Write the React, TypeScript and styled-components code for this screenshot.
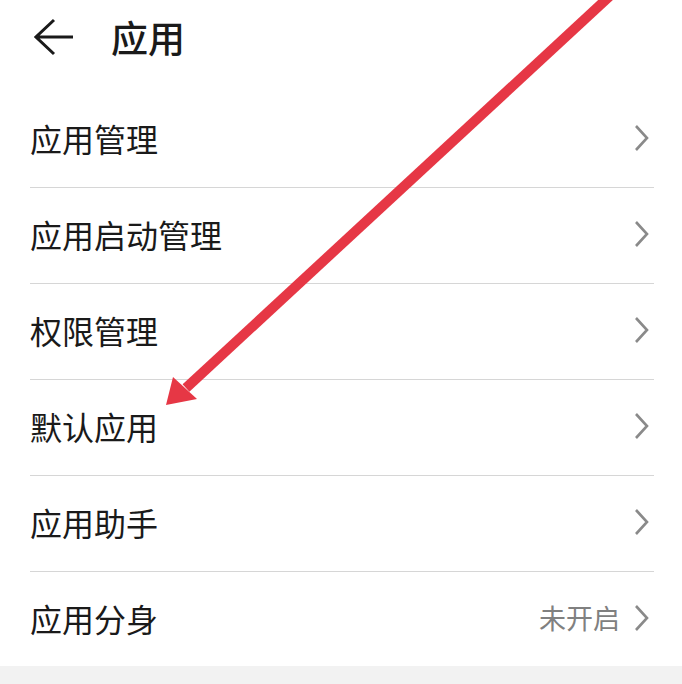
import React from "react";
import styled, { createGlobalStyle } from "styled-components";

const Global = createGlobalStyle`
  html, body { margin: 0; padding: 0; background: #ffffff; }
  body { font-family: "Noto Sans CJK SC", "Noto Sans", sans-serif; }
`;

const Page = styled.div`
  position: relative;
  width: 682px;
  height: 684px;
  overflow: hidden;
  background: #ffffff;
  display: flex;
  flex-direction: column;
`;

const Header = styled.header`
  height: 74px;
  display: flex;
  align-items: center;
  padding-left: 34px;
  gap: 35px;
`;

const Title = styled.h1`
  margin: 0;
  font-size: 37px;
  font-weight: 500;
  color: #1a1a1a;
  line-height: 1;
`;

const List = styled.div`
  margin-top: 18px;
  padding: 0 28px 0 30px;
  display: flex;
  flex-direction: column;
`;

const Row = styled.div<{ $last?: boolean }>`
  height: ${(p) => (p.$last ? 94 : 96)}px;
  box-sizing: border-box;
  padding-bottom: 3px;
  display: flex;
  align-items: center;
  justify-content: space-between;
  border-bottom: ${(p) => (p.$last ? "none" : "1px solid #d6d6d6")};
`;

const Label = styled.span`
  font-size: 32px;
  color: #1a1a1a;
  line-height: 1;
`;

const Right = styled.div`
  display: flex;
  align-items: center;
  gap: 14px;
  padding-right: 4px;
`;

const Value = styled.span`
  font-size: 27px;
  color: #808080;
  line-height: 1;
`;

const Footer = styled.div`
  flex: 1;
  background: #f2f2f2;
`;

const Overlay = styled.svg`
  position: absolute;
  left: 0;
  top: 0;
  pointer-events: none;
`;

const Chevron = () => (
  <svg width="16" height="28" viewBox="0 0 16 28">
    <path d="M2 2 L13 14 L2 26" fill="none" stroke="#8a8a8a" strokeWidth="2.6" strokeLinejoin="miter" />
  </svg>
);

const BackArrow = () => (
  <svg width="42" height="42" viewBox="0 0 42 42">
    <path d="M20 4 L2 21 L20 38 M2 21 L39 21" fill="none" stroke="#1a1a1a" strokeWidth="3" />
  </svg>
);

const items: { label: string; value?: string }[] = [
  { label: "应用管理" },
  { label: "应用启动管理" },
  { label: "权限管理" },
  { label: "默认应用" },
  { label: "应用助手" },
  { label: "应用分身", value: "未开启" },
];

export default function App() {
  return (
    <>
      <Global />
      <Page>
        <Header>
          <BackArrow />
          <Title>应用</Title>
        </Header>
        <List>
          {items.map((it, i) => (
            <Row key={it.label} $last={i === items.length - 1}>
              <Label>{it.label}</Label>
              <Right>
                {it.value && <Value>{it.value}</Value>}
                <Chevron />
              </Right>
            </Row>
          ))}
        </List>
        <Footer />
        <Overlay width="682" height="684" viewBox="0 0 682 684">
          <line x1="612" y1="-6" x2="186" y2="388" stroke="#e63745" strokeWidth="10" />
          <polygon points="166,405 173,377 197,399" fill="#e63745" />
        </Overlay>
      </Page>
    </>
  );
}
